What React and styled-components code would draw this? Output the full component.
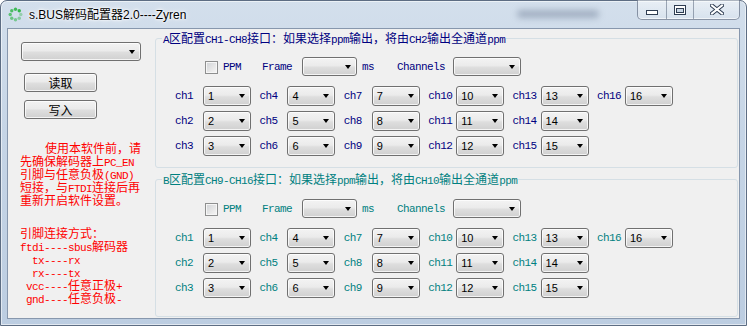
import React from 'react'
import styled, { createGlobalStyle } from 'styled-components'

const NAVY = '#000080'
const TEAL = '#008080'

const Global = createGlobalStyle`
  html, body { margin: 0; padding: 0; }
  body { width: 747px; height: 326px; overflow: hidden; background: #fff; }
`

const Win = styled.div`
  box-sizing: border-box;
  width: 747px;
  height: 326px;
  display: flex;
  flex-direction: column;
  padding: 0 6px 6px;
  border: 1px solid #5d6d83;
  border-radius: 7px 7px 0 0;
  background: linear-gradient(180deg, #d3dfec 0%, #c6d5e6 40%, #bccde1 100%);
  box-shadow: inset 0 0 0 1px rgba(255, 255, 255, 0.55);
`

const TitleBar = styled.div`
  height: 27px;
  flex: none;
  display: flex;
  align-items: flex-start;
`

const AppIcon = styled.svg`
  flex: none;
  margin: 6px 0 0 1px;
`

const TitleText = styled.div`
  margin: 6px 0 0 6px;
  font: 12px/16px "Liberation Sans", "Noto Sans CJK SC", sans-serif;
  color: #000;
  text-shadow: 0 0 6px #fff, 0 0 3px #fff, 0 0 2px #fff;
`

const Smudge = styled.div`
  margin: 9px 38px 0 auto;
  width: 82px;
  height: 8px;
  border-radius: 4px;
  background: rgba(105, 120, 145, 0.45);
  filter: blur(3px);
`

const Caps = styled.div`
  display: flex;
  height: 19px;
  margin-top: -1px;
  border: 1px solid rgba(60, 75, 100, 0.55);
  border-top: none;
  border-radius: 0 0 5px 5px;
  overflow: hidden;
  background: linear-gradient(180deg, rgba(255, 255, 255, 0.5), rgba(255, 255, 255, 0.15));
  box-shadow: inset 0 -1px 0 rgba(255, 255, 255, 0.6);
`

const CapBtn = styled.div`
  width: ${p => p.$w}px;
  display: flex;
  align-items: center;
  justify-content: center;
  & + & { border-left: 1px solid rgba(60, 75, 100, 0.45); }
`

const Client = styled.div`
  display: flex;
  height: 289px;
  flex: none;
  border: 1px solid #8797ad;
  background: #f0f0f0;
`

const Side = styled.div`
  box-sizing: border-box;
  width: 147px;
  flex: none;
  display: flex;
  flex-direction: column;
  align-items: flex-start;
  padding: 13px 0 0 13px;
`

const Combo = styled.div`
  box-sizing: border-box;
  width: ${p => p.$w}px;
  height: ${p => p.$h || 19}px;
  flex: none;
  display: flex;
  align-items: center;
  padding: 0 5px 0 4px;
  border: 1px solid #707070;
  border-radius: 3px;
  background: linear-gradient(180deg, #f3f3f3 0%, #ebebeb 45%, #dedede 55%, #d0d0d0 100%);
  box-shadow: inset 0 0 0 1px rgba(255, 255, 255, 0.75);
  font: 11px/14px "Liberation Sans", sans-serif;
  color: #000;
`

const Arrow = styled.span`
  margin-left: auto;
  width: 0;
  height: 0;
  border-left: 3.5px solid transparent;
  border-right: 3.5px solid transparent;
  border-top: 4px solid #000;
`

const Button = styled.div`
  box-sizing: border-box;
  width: 73px;
  height: 19px;
  margin: ${p => p.$mt}px 0 0 3px;
  display: flex;
  align-items: center;
  justify-content: center;
  border: 1px solid #707070;
  border-radius: 3px;
  background: linear-gradient(180deg, #f3f3f3 0%, #ebebeb 45%, #dedede 55%, #d0d0d0 100%);
  box-shadow: inset 0 0 0 1px rgba(255, 255, 255, 0.75);
  font: 12px/14px "Noto Sans CJK SC", sans-serif;
  color: #000;
`

const Notes = styled.div`
  margin: ${p => p.$mt}px 0 0 -1px;
  white-space: pre;
  text-indent: ${p => p.$indent || 0}px;
  font: 12px/12.5px "Noto Sans CJK SC", sans-serif;
  color: #ff0000;
`

/* ASCII runs: 6px advance like the 12px bitmap song font */
const Asc = styled.span`
  font-family: "Liberation Mono", monospace;
  font-size: 11px;
  line-height: 9px;
  letter-spacing: -0.6px;
`

const Main = styled.div`
  width: 583px;
  flex: none;
  display: flex;
  flex-direction: column;
`

const Group = styled.fieldset`
  margin: ${p => p.$mt}px 0 ${p => p.$mb || 0}px;
  padding: ${p => p.$pt}px 0 11px 6px;
  min-width: 0;
  flex: ${p => (p.$fill ? 1 : 'none')};
  border: 1px solid #d5dfe5;
  border-radius: 3px;
`

const Legend = styled.legend`
  padding: 0 1px;
  font: 12px/14px "Noto Sans CJK SC", sans-serif;
  color: ${p => p.$c};
  white-space: pre;
`

const Body = styled.div`
  padding-left: 13px;
  display: flex;
  flex-direction: column;
  gap: 10px;
`

const OptRow = styled.div`
  display: flex;
  align-items: center;
  height: 19px;
  padding-left: 30px;
`

const Check = styled.span`
  box-sizing: border-box;
  width: 13px;
  height: 13px;
  flex: none;
  margin-top: 1px;
  border: 1px solid #8e8f8f;
  background: linear-gradient(135deg, #cfd2d6 0%, #e8e8e8 60%, #f7f7f7 100%);
  box-shadow: inset 0 0 0 1px #f6f6f6;
`

const Lbl = styled.span`
  flex: none;
  margin-left: ${p => p.$ml || 0}px;
  margin-right: ${p => p.$mr || 0}px;
  font: 11px/14px "Liberation Mono", monospace;
  letter-spacing: -0.6px;
  color: ${p => p.$c};
`

const Grid = styled.div`
  display: grid;
  grid-template-columns: repeat(6, 76px);
  column-gap: 8.4px;
  row-gap: 5px;
`

const Cell = styled.div`
  display: flex;
  align-items: center;
`

const ChName = styled(Lbl)`
  width: 28px;
`

const Sim = ({ text }) =>
  text.split(/([\x20-\x7e]+)/).map((s, i) => (i % 2 ? <Asc key={i}>{s}</Asc> : s))

const Spinner = () => {
  const dots = Array.from({ length: 8 }, (_, i) => {
    const a = (i / 8) * Math.PI * 2
    return { x: 7.5 + Math.cos(a) * 5.3, y: 7.5 + Math.sin(a) * 5.3, o: 0.35 + (i / 8) * 0.65 }
  })
  return (
    <AppIcon width="15" height="15" viewBox="0 0 15 15">
      {dots.map((d, i) => (
        <circle key={i} cx={d.x} cy={d.y} r="1.7" fill="#22b33a" opacity={d.o} />
      ))}
    </AppIcon>
  )
}

const Section = ({ title, color, mt, mb, pt, fill }) => {
  const rows = []
  for (let r = 0; r < 3; r++) {
    for (let c = 0; c < 6; c++) {
      const n = c * 3 + r + 1
      rows.push(
        n <= 16 ? (
          <Cell key={`${r}-${c}`}>
            <ChName $c={color}>ch{n}</ChName>
            <Combo $w={48} $h={20}>
              {n}
              <Arrow />
            </Combo>
          </Cell>
        ) : (
          <Cell key={`${r}-${c}`} />
        )
      )
    }
  }
  return (
    <Group $mt={mt} $mb={mb} $pt={pt} $fill={fill}>
      <Legend $c={color}>
        <Sim text={title} />
      </Legend>
      <Body>
        <OptRow>
          <Check />
          <Lbl $c={color} $ml={5}>PPM</Lbl>
          <Lbl $c={color} $ml={21} $mr={10}>Frame</Lbl>
          <Combo $w={55}>
            <Arrow />
          </Combo>
          <Lbl $c={color} $ml={5}>ms</Lbl>
          <Lbl $c={color} $ml={23} $mr={8}>Channels</Lbl>
          <Combo $w={68}>
            <Arrow />
          </Combo>
        </OptRow>
        <Grid>{rows}</Grid>
      </Body>
    </Group>
  )
}

export default function App() {
  return (
    <>
      <Global />
      <Win>
        <TitleBar>
          <Spinner />
          <TitleText>s.BUS解码配置器2.0----Zyren</TitleText>
          <Smudge />
          <Caps>
            <CapBtn $w={28}>
              <svg width="12" height="5" viewBox="0 0 12 5" style={{ marginTop: 6 }}>
                <rect x="0.5" y="0.5" width="11" height="4" fill="#fff" stroke="#2f3d52" />
              </svg>
            </CapBtn>
            <CapBtn $w={26}>
              <svg width="12" height="10" viewBox="0 0 12 10">
                <rect x="0.5" y="0.5" width="11" height="9" fill="#fff" stroke="#2f3d52" />
                <rect x="2.5" y="3.5" width="7" height="4" fill="#c9d6e4" stroke="#2f3d52" />
              </svg>
            </CapBtn>
            <CapBtn $w={45}>
              <svg width="14" height="11" viewBox="0 0 14 11">
                <path d="M2 1.5 L12 9.5 M12 1.5 L2 9.5" stroke="#2f3d52" strokeWidth="4" strokeLinecap="square" />
                <path d="M2 1.5 L12 9.5 M12 1.5 L2 9.5" stroke="#fff" strokeWidth="2" strokeLinecap="square" />
              </svg>
            </CapBtn>
          </Caps>
        </TitleBar>
        <Client>
          <Side>
            <Combo $w={120}>
              <Arrow />
            </Combo>
            <Button $mt={12}>读取</Button>
            <Button $mt={8}>写入</Button>
            <Notes $mt={23} $indent={25}>
              <Sim
                text={
                  '使用本软件前，请\n先确保解码器上PC_EN\n引脚与任意负极(GND)\n短接，与FTDI连接后再\n重新开启软件设置。'
                }
              />
            </Notes>
            <Notes $mt={21}>
              <Sim
                text={
                  '引脚连接方式：\nftdi----sbus解码器\n  tx----rx\n  rx----tx\n vcc----任意正极+\n gnd----任意负极-'
                }
              />
            </Notes>
          </Side>
          <Main>
            <Section
              title="A区配置CH1-CH8接口：如果选择ppm输出，将由CH2输出全通道ppm"
              color={NAVY}
              mt={2}
              pt={12}
            />
            <Section
              title="B区配置CH9-CH16接口：如果选择ppm输出，将由CH10输出全通道ppm"
              color={TEAL}
              mt={4}
              mb={1}
              pt={13}
              fill
            />
          </Main>
        </Client>
      </Win>
    </>
  )
}
